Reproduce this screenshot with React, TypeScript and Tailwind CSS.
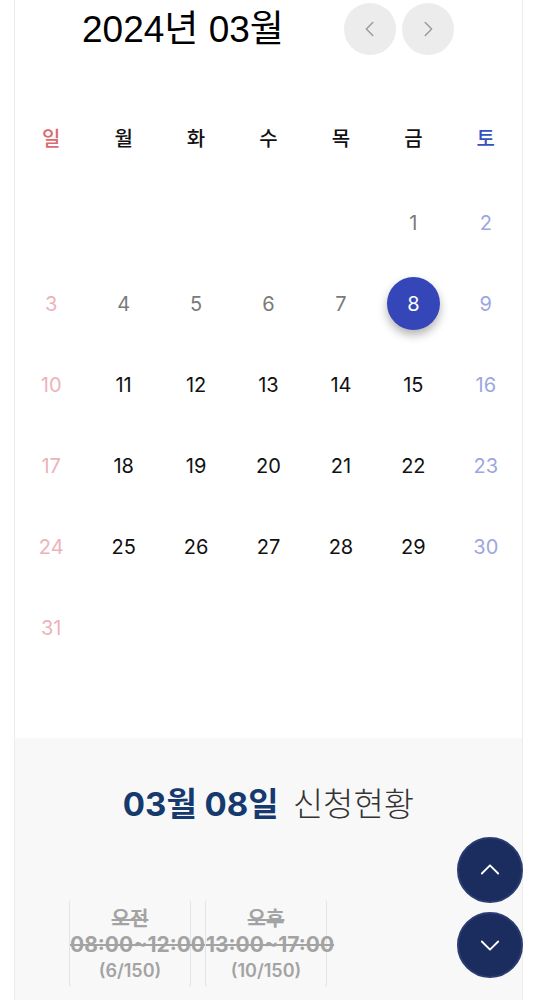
import React from 'react';

const KR = { fontFamily: '"Noto Sans CJK KR", "Noto Sans", sans-serif' };
const NUM = { fontFamily: 'Inter, "Noto Sans CJK KR", sans-serif' };
const TITLE = { fontFamily: '"Liberation Sans", "Noto Sans CJK KR", sans-serif' };

const weekdays = ['일', '월', '화', '수', '목', '금', '토'];

function dayColor(col: number, d: number, selected: boolean) {
  if (selected) return 'text-white';
  if (col === 0) return 'text-[#ecb3bb]';
  if (col === 6) return 'text-[#9ca7e2]';
  if (d < 8) return 'text-[#7a7a7a]';
  return 'text-[#111]';
}

function Chevron({ dir, className }: { dir: 'left' | 'right' | 'up' | 'down'; className?: string }) {
  const d = {
    left: 'M15 5 L8 12 L15 19',
    right: 'M9 5 L16 12 L9 19',
    up: 'M5 15 L12 8 L19 15',
    down: 'M5 9 L12 16 L19 9',
  }[dir];
  return (
    <svg viewBox="0 0 24 24" fill="none" stroke="currentColor" strokeWidth={1.6} strokeLinecap="round" strokeLinejoin="round" className={className}>
      <path d={d} />
    </svg>
  );
}

export default function App() {
  // March 2024 starts on Friday
  const cells: (number | null)[] = [];
  for (let i = 0; i < 5; i++) cells.push(null);
  for (let d = 1; d <= 31; d++) cells.push(d);
  while (cells.length % 7) cells.push(null);

  return (
    <div className="min-h-screen bg-white" style={KR}>
      <div className="ml-[14px] mr-[10px] border-x border-[#ececec]">
        <div className="bg-white">
          {/* header */}
          <div className="h-[58px] flex items-center justify-between pl-[67px] pr-[68px]">
            <div className="text-[37px] leading-none text-black" style={TITLE}>2024년 03월</div>
            <div className="flex gap-[6px]">
              <button className="w-[52px] h-[52px] rounded-full bg-[#ececec] flex items-center justify-center text-[#9a9a9a]">
                <Chevron dir="left" className="w-[22px] h-[22px]" />
              </button>
              <button className="w-[52px] h-[52px] rounded-full bg-[#ececec] flex items-center justify-center text-[#9a9a9a]">
                <Chevron dir="right" className="w-[22px] h-[22px]" />
              </button>
            </div>
          </div>

          {/* weekdays */}
          <div className="mt-[40px] grid grid-cols-7 h-[80px] items-center text-center text-[20px] font-medium">
            {weekdays.map((w, i) => (
              <div key={w} className={i === 0 ? 'text-[#dc6a72]' : i === 6 ? 'text-[#3652c2]' : 'text-[#111]'}>
                {w}
              </div>
            ))}
          </div>

          {/* dates */}
          <div className="mt-[4px] grid grid-cols-7 pb-[70px]" style={NUM}>
            {cells.map((d, i) => {
              const col = i % 7;
              const sel = d === 8;
              return (
                <div key={i} className="h-[81px] flex items-center justify-center">
                  {d !== null && (
                    <span
                      className={
                        'text-[20px] flex items-center justify-center ' +
                        dayColor(col, d, sel) +
                        (sel ? ' w-[53px] h-[53px] rounded-full bg-[#3547b8] shadow-[0_5px_10px_rgba(0,0,0,0.3)]' : '')
                      }
                    >
                      {d}
                    </span>
                  )}
                </div>
              );
            })}
          </div>
        </div>

        {/* status section */}
        <div className="bg-[#f8f8f9] pt-[44px] pb-[60px]">
          <div className="text-center text-[33px] leading-[40px]">
            <span className="font-bold text-[#163a6e]" style={NUM}>03월 08일</span>
            <span className="ml-[14px] font-light text-[#333]">신청현황</span>
          </div>
          <div className="mt-[76px] flex gap-[14px] pl-[54px]" style={NUM}>
            {[
              { t: '오전', r: '08:00~12:00', c: '(6/150)' },
              { t: '오후', r: '13:00~17:00', c: '(10/150)' },
            ].map((s) => (
              <div key={s.t} className="w-[122px] h-[87px] border-x border-[#e4e4e4] rounded-[3px] text-center pt-[6px] text-[#a3a3a3]">
                <div className="text-[20px] font-bold leading-[26px] line-through">{s.t}</div>
                <div className="text-[21px] font-bold leading-[26px] line-through whitespace-nowrap">{s.r}</div>
                <div className="text-[18px] font-semibold leading-[26px]">{s.c}</div>
              </div>
            ))}
          </div>
        </div>
      </div>

      {/* floating buttons */}
      <div className="fixed right-[10px] bottom-[22px] flex flex-col gap-[9px]">
        <button className="w-[66px] h-[66px] rounded-full bg-[#1b2c5e] border-2 border-[#2b3c72] flex items-center justify-center text-white">
          <Chevron dir="up" className="w-[28px] h-[28px]" />
        </button>
        <button className="w-[66px] h-[66px] rounded-full bg-[#1b2c5e] border-2 border-[#2b3c72] flex items-center justify-center text-white">
          <Chevron dir="down" className="w-[28px] h-[28px]" />
        </button>
      </div>
    </div>
  );
}
